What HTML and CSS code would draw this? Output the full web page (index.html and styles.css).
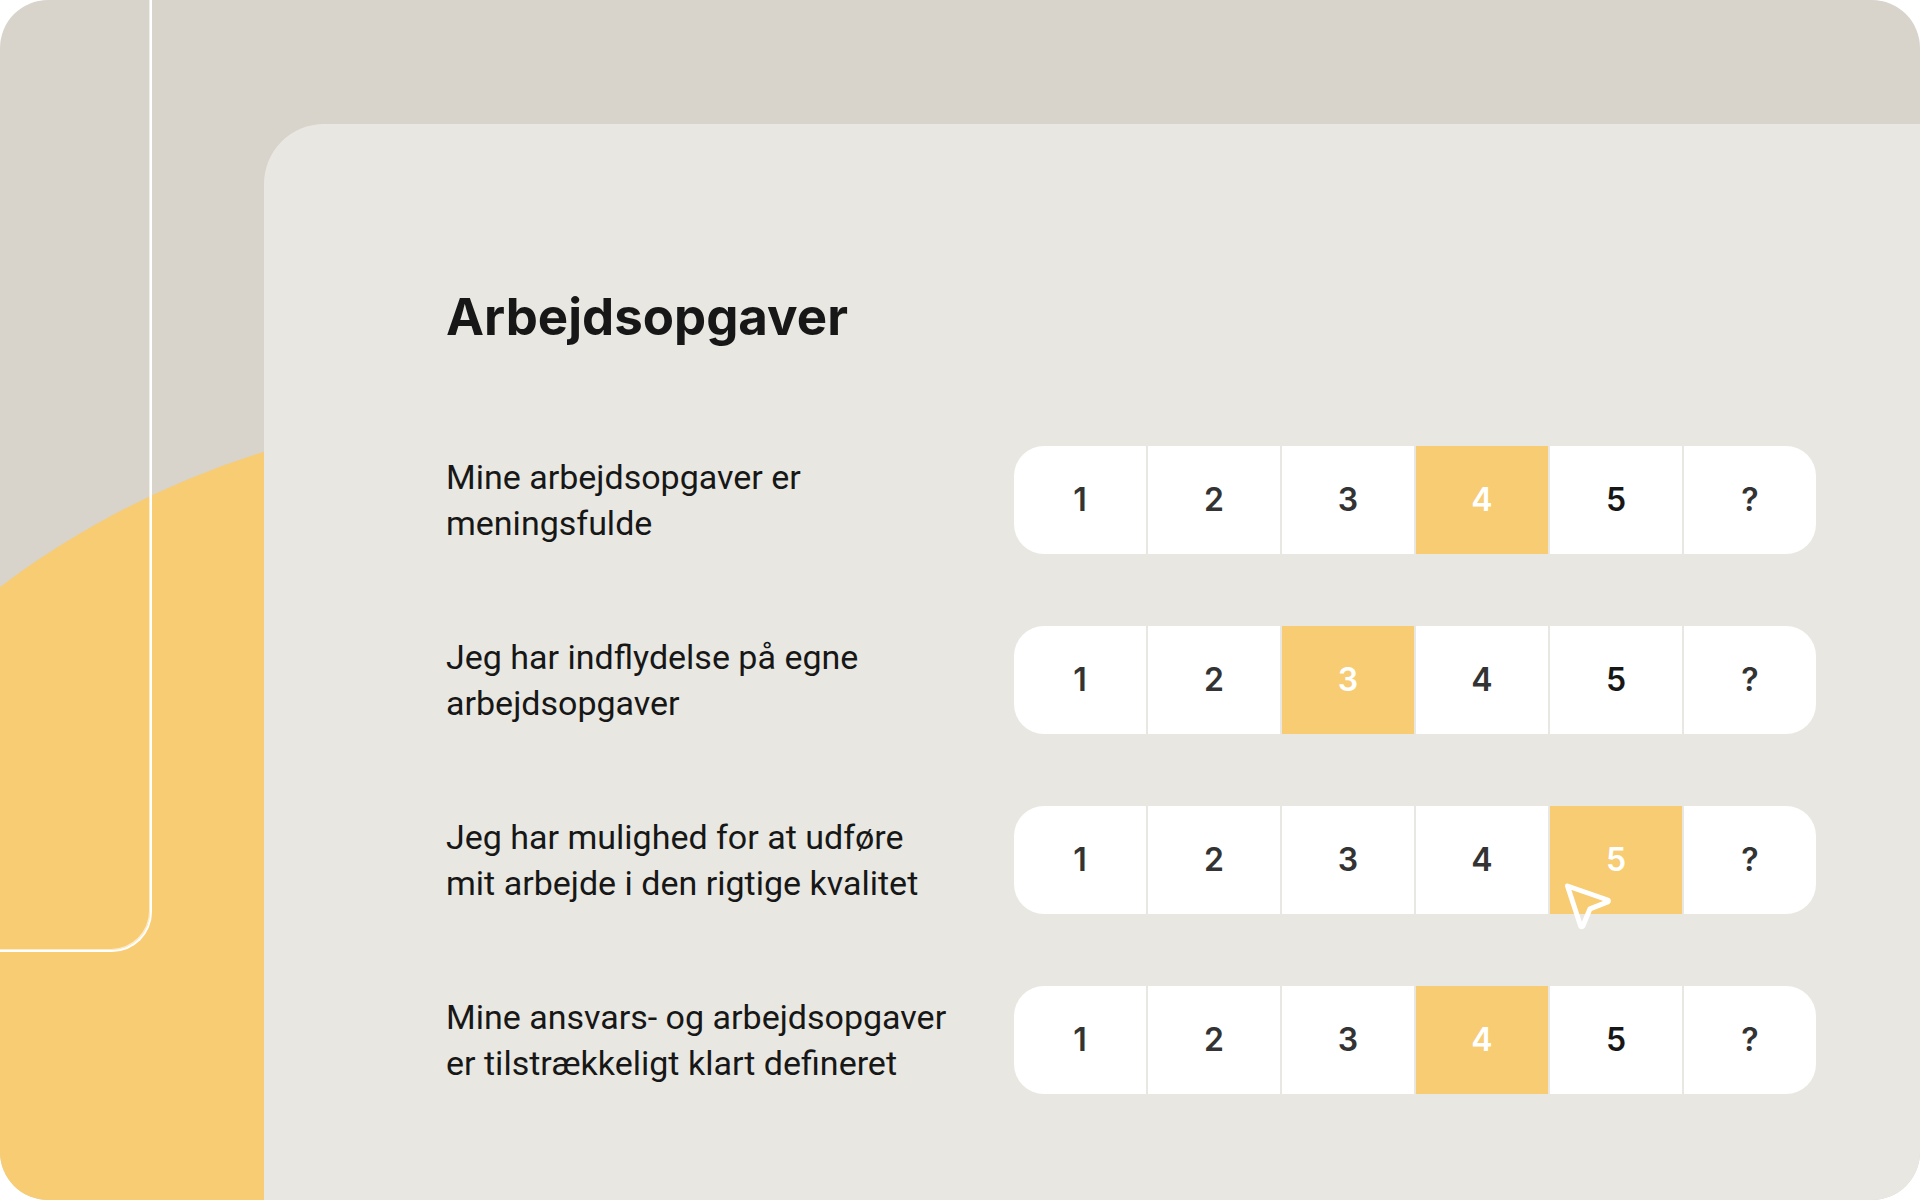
FILE: index.html
```html
<!DOCTYPE html>
<html lang="da">
<head>
<meta charset="utf-8">
<meta name="viewport" content="width=device-width, initial-scale=1">
<title>Arbejdsopgaver</title>
<link rel="stylesheet" href="styles.css">
</head>
<body>
<div class="stage">
  <div class="circle" aria-hidden="true"></div>
  <div class="outline" aria-hidden="true"></div>
  <main class="panel">
    <h1 class="title">Arbejdsopgaver</h1>
    <form class="survey">
      <fieldset class="row" aria-labelledby="q1">
        <p class="question" id="q1">Mine arbejdsopgaver er meningsfulde</p>
        <div class="scale">
          <label class="option"><input type="radio" name="q1" value="1"><span>1</span></label>
          <label class="option"><input type="radio" name="q1" value="2"><span>2</span></label>
          <label class="option"><input type="radio" name="q1" value="3"><span>3</span></label>
          <label class="option"><input type="radio" name="q1" value="4" checked><span>4</span></label>
          <label class="option option-dark"><input type="radio" name="q1" value="5"><span>5</span></label>
          <label class="option"><input type="radio" name="q1" value="unknown"><span>?</span></label>
        </div>
      </fieldset>
      <fieldset class="row" aria-labelledby="q2">
        <p class="question" id="q2">Jeg har indflydelse på egne arbejdsopgaver</p>
        <div class="scale">
          <label class="option"><input type="radio" name="q2" value="1"><span>1</span></label>
          <label class="option"><input type="radio" name="q2" value="2"><span>2</span></label>
          <label class="option"><input type="radio" name="q2" value="3" checked><span>3</span></label>
          <label class="option"><input type="radio" name="q2" value="4"><span>4</span></label>
          <label class="option option-dark"><input type="radio" name="q2" value="5"><span>5</span></label>
          <label class="option"><input type="radio" name="q2" value="unknown"><span>?</span></label>
        </div>
      </fieldset>
      <fieldset class="row" aria-labelledby="q3">
        <p class="question" id="q3">Jeg har mulighed for at udføre mit arbejde i den rigtige kvalitet</p>
        <div class="scale">
          <label class="option"><input type="radio" name="q3" value="1"><span>1</span></label>
          <label class="option"><input type="radio" name="q3" value="2"><span>2</span></label>
          <label class="option"><input type="radio" name="q3" value="3"><span>3</span></label>
          <label class="option"><input type="radio" name="q3" value="4"><span>4</span></label>
          <label class="option option-dark"><input type="radio" name="q3" value="5" checked><span>5</span>
            <svg class="pointer" viewBox="0 0 48 50" aria-hidden="true"><path d="M3.5 4 L43.8 18 Q45 19 43.8 19.8 L26 26.8 L18.9 44 Q17.7 45.6 16.6 44 Z"/></svg>
          </label>
          <label class="option"><input type="radio" name="q3" value="unknown"><span>?</span></label>
        </div>
      </fieldset>
      <fieldset class="row" aria-labelledby="q4">
        <p class="question" id="q4">Mine ansvars- og arbejdsopgaver er tilstrækkeligt klart defineret</p>
        <div class="scale">
          <label class="option"><input type="radio" name="q4" value="1"><span>1</span></label>
          <label class="option"><input type="radio" name="q4" value="2"><span>2</span></label>
          <label class="option"><input type="radio" name="q4" value="3"><span>3</span></label>
          <label class="option"><input type="radio" name="q4" value="4" checked><span>4</span></label>
          <label class="option option-dark"><input type="radio" name="q4" value="5"><span>5</span></label>
          <label class="option"><input type="radio" name="q4" value="unknown"><span>?</span></label>
        </div>
      </fieldset>
    </form>
  </main>
</div>
</body>
</html>
```
FILE: styles.css
```css
*,
*::before,
*::after {
  box-sizing: border-box;
}

body {
  margin: 0;
  background: #fff;
  color: #171717;
  font-family: Roboto, sans-serif;
}

.stage {
  position: relative;
  display: flex;
  min-height: 100vh;
  padding: 124px 0 0 264px;
  overflow: hidden;
  background: #d8d3cb;
  border-radius: 48px;
}

/* Decoration behind the panel */
.circle {
  position: absolute;
  top: 413px;
  left: -344px;
  width: 1728px;
  height: 1728px;
  background: #f7cc72;
  border-radius: 50%;
}

.outline {
  position: absolute;
  top: 0;
  left: 0;
  width: 152px;
  height: 952px;
  border: solid #fff;
  border-width: 0 2px 2px 0;
  border-bottom-right-radius: 40px;
  box-shadow: inset -1px -1px 0 rgba(255, 255, 255, 0.6);
}

.panel {
  position: relative;
  flex: 1;
  padding: 160px 104px 104px 182px;
  background: #e8e7e1;
  border-top-left-radius: 60px;
}

.title {
  margin: 0 0 96px;
  font: 700 51px/66px Inter, sans-serif;
}

.survey {
  display: grid;
  gap: 72px;
}

.row {
  display: grid;
  grid-template-columns: 508fr 802fr;
  column-gap: 60px;
  align-items: center;
  min-width: 0;
  margin: 0;
  padding: 0;
  border: 0;
}

.question {
  max-width: 508px;
  margin: 0;
  font-size: 34px;
  line-height: 46px;
}

.scale {
  display: grid;
  grid-template-columns: repeat(6, 1fr);
  gap: 2px;
}

.option {
  position: relative;
  display: flex;
  align-items: center;
  justify-content: center;
  height: 108px;
  background: #fff;
  color: #333;
  font: 600 32px/40px Inter, sans-serif;
  cursor: pointer;
}

.option-dark {
  color: #171717;
}

.option:first-child {
  border-radius: 30px 0 0 30px;
}

.option:last-child {
  border-radius: 0 30px 30px 0;
}

.option input {
  position: absolute;
  inset: 0;
  width: 100%;
  height: 100%;
  margin: 0;
  opacity: 0;
  cursor: pointer;
}

.option:has(input:checked) {
  background: #f7cc72;
  color: #fff;
}

.option:has(input:focus-visible) {
  outline: 3px solid #171717;
}

/* Mouse pointer resting on the chosen answer */
.pointer {
  position: absolute;
  top: 76px;
  left: 14px;
  width: 48px;
  height: 50px;
  fill: none;
  stroke: #fff;
  stroke-width: 5;
  stroke-linejoin: round;
  pointer-events: none;
}
```
